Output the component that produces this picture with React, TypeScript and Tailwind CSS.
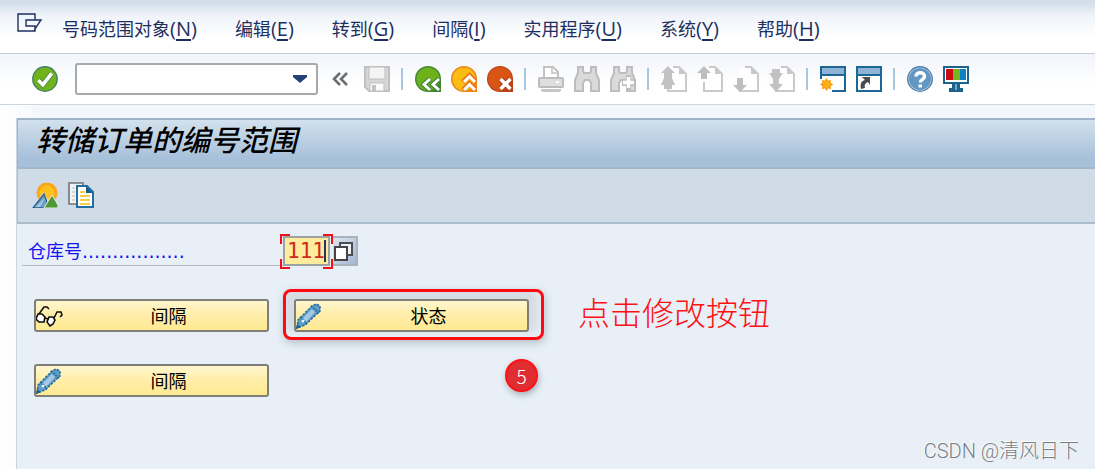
import { useState } from "react";
import type { ReactNode } from "react";

const MENUS = [
  { label: "号码范围对象", key: "N" },
  { label: "编辑", key: "E" },
  { label: "转到", key: "G" },
  { label: "间隔", key: "I" },
  { label: "实用程序", key: "U" },
  { label: "系统", key: "Y" },
  { label: "帮助", key: "H" },
];

export default function App() {
  const [command, setCommand] = useState("");
  const [warehouse, setWarehouse] = useState("111");

  return (
    <div className="relative flex min-h-screen flex-col bg-white font-['Open_Sans','Noto_Sans_CJK_SC',sans-serif] text-[18px] leading-6">
      {/* Menu bar */}
      <nav className="flex h-[54px] items-center border-b border-[#c3ced9] bg-linear-to-b from-[#d3deea] from-5% via-[#f0f4f9] via-30% to-white to-70% pl-4 text-[#1d2f60]">
        <button aria-label="Window menu" className="mb-2 h-6 w-[46px]">
          <WindowMenuIcon />
        </button>
        <div className="flex gap-[38px] pt-1">
          {MENUS.map((m) => (
            <button key={m.key} className="whitespace-nowrap">
              {m.label}
              <span className="text-[20px]">
                (<span className="underline underline-offset-3">{m.key}</span>)
              </span>
            </button>
          ))}
        </div>
      </nav>

      {/* Standard toolbar */}
      <div className="flex h-[51px] shrink-0 items-center gap-2.5 border-b border-[#ccd6df] bg-linear-to-b from-[#f1f4fa] to-white to-60% pb-px pl-8">
        <IconBtn label="Enter">
          <circle cx="13" cy="13" r="12.2" fill="#70b31c" stroke="#3f8368" strokeWidth="1.4" />
          <path d="M6.3 14.2l4.6 4.6 8.8-11.5" fill="none" stroke="#4e8c3b" strokeWidth="5.4" />
          <path d="M6.3 14.2l4.6 4.6 8.8-11.5" fill="none" stroke="#fff" strokeWidth="3.6" />
        </IconBtn>
        <div className="ml-[7px] flex h-8 w-[243px] items-center rounded-[3px] border-2 border-[#a6aaad] bg-white">
          <input
            aria-label="Command field"
            value={command}
            onChange={(e) => setCommand(e.target.value)}
            className="min-w-0 flex-1 bg-transparent px-1 outline-none"
          />
          <button aria-label="Command history" className="mr-2">
            <svg width="16" height="10" viewBox="0 0 16 10">
              <path d="M1 1h14v2l-7 6-7-6z" fill="#24427a" />
            </svg>
          </button>
        </div>
        <IconBtn label="Collapse">
          <path d="M12 7l-6 6 6 6M19 7l-6 6 6 6" fill="none" stroke="#6d6e70" strokeWidth="2.6" />
        </IconBtn>
        <IconBtn label="Save">
          <path d="M1 1h24v24H5l-4-4z" fill="#d6d6d6" stroke="#c0c0c0" strokeWidth="2" />
          <path d="M5 1h16v12H5z" fill="#f4f4f4" stroke="#c0c0c0" />
          <path d="M6 17h14v8H6z" fill="#fafafa" stroke="#c0c0c0" />
          <path d="M8 19h4v6H8z" fill="#c4c4c4" />
        </IconBtn>
        <Separator />
        <IconBtn label="Back">
          <path d="M26 26H13A13 13 0 1 1 26 13z" fill="#42882f" />
          <circle cx="13" cy="13" r="11.5" fill="#6fb11b" />
          <path d="M15 13l-6 5.5 6 5.5M24 13l-6 5.5 6 5.5" fill="none" stroke="#327b35" strokeWidth="5" />
          <path d="M15 13l-6 5.5 6 5.5M24 13l-6 5.5 6 5.5" fill="none" stroke="#fff" strokeWidth="3" />
        </IconBtn>
        <IconBtn label="Exit">
          <path d="M26 26H13A13 13 0 1 1 26 13z" fill="#ed8217" />
          <circle cx="13" cy="13" r="11.5" fill="#fbbd13" />
          <path d="M12 16l6.5-6.5L25 16M12 24l6.5-6.5L25 24" fill="none" stroke="#e97715" strokeWidth="5" />
          <path d="M13 16l5.5-5.5L24 16M13 24l5.5-5.5L24 24" fill="none" stroke="#fff" strokeWidth="3" />
        </IconBtn>
        <IconBtn label="Cancel">
          <path d="M26 26H13A13 13 0 1 1 26 13z" fill="#ba421b" />
          <circle cx="13" cy="13" r="11.8" fill="#d95514" />
          <path d="M13.5 13l10 10M23.5 13l-10 10" fill="none" stroke="#a93a1b" strokeWidth="5.6" />
          <path d="M13.5 13l10 10M23.5 13l-10 10" fill="none" stroke="#fff" strokeWidth="3.6" />
        </IconBtn>
        <Separator />
        <IconBtn label="Print">
          <path d="M6 13V1h9l5 5v7" fill="#fff" stroke="#c2c2c2" strokeWidth="2" />
          <path d="M14 1v6h6" fill="none" stroke="#c2c2c2" strokeWidth="1.6" />
          <rect x="1" y="12" width="24" height="9" rx="1" fill="#dedede" stroke="#bcbcbc" strokeWidth="2" />
          <path d="M18 16h3" stroke="#fff" strokeWidth="2" />
          <path d="M3 23h20v2l-2 1H5l-2-1z" fill="#c6c6c6" />
        </IconBtn>
        <IconBtn label="Find">
          <Binoculars />
        </IconBtn>
        <IconBtn label="Find next">
          <Binoculars />
          <path d="M16 9h5v4h5v7h-5v5h-5v-5h-4v-7h4z" fill="#bdbdbd" />
          <path d="M18.5 11v11M13 16.5h11" stroke="#fff" strokeWidth="3.4" />
        </IconBtn>
        <Separator />
        <IconBtn label="First page">
          <Sheet />
          <path d="M7 0l7 7h-3v5l3 7h-3v4H3v-4H0l3-7V7H0z" fill="#c2c2c2" />
        </IconBtn>
        <IconBtn label="Previous page">
          <Sheet />
          <path d="M7 0l7 7h-4v6H4V7H0z" fill="#bebebe" />
        </IconBtn>
        <IconBtn label="Next page">
          <Sheet />
          <path d="M7 26l7-7h-4v-7H4v7H0z" fill="#bebebe" />
        </IconBtn>
        <IconBtn label="Last page">
          <Sheet />
          <path d="M3 3h8v4h3l-4 6v5h4l-7 8-7-8h4v-5L0 7h3z" fill="#c2c2c2" />
        </IconBtn>
        <Separator />
        <IconBtn label="New session">
          <WindowFrame />
          <path d="M0 13h12v13H0z" fill="#fff" />
          <path
            d="M6.5 12l1.6 2.8 3-1-.6 3 2.8 1.7-2.8 1.7.6 3-3-1-1.6 2.8-1.6-2.8-3 1 .6-3L0 18.500l2.500-1.700-.6-3 3 1z"
            fill="#f79a0b"
          />
          <circle cx="6.5" cy="18.5" r="3.4" fill="#fbb016" />
        </IconBtn>
        <IconBtn label="Create shortcut">
          <WindowFrame />
          <path d="M5 23c-1-5 0-8 4-9l-3-3h8v8l-2-3c-3 1-4 3-3 6z" fill="#454b50" />
        </IconBtn>
        <Separator />
        <IconBtn label="Help">
          <circle cx="13" cy="13" r="12.2" fill="#dbe8f2" stroke="#4a7ba3" strokeWidth="1.4" />
          <circle cx="13" cy="13" r="11" fill="#6397c3" />
          <path d="M9 10.5c0-5 8.500-5 8.500-.3 0 3.300-4.200 3-4.200 6.300" fill="none" stroke="#fff" strokeWidth="3.4" />
          <path d="M11.500 18.500h3.500v3h-3.500z" fill="#fff" />
        </IconBtn>
        <IconBtn label="Customize layout">
          <path d="M0 0h26v18H0z" fill="#1b628d" />
          <path d="M2 2h22v14H2z" fill="#fff" />
          <path d="M3 3h7v11H3z" fill="#cc0a12" />
          <path d="M10 3h7v11h-7z" fill="#75b51e" />
          <path d="M17 3h6v11h-6z" fill="#0c7fc5" />
          <path d="M9 18h8v4h3v4H6v-4h3z" fill="#1b628d" />
          <path d="M12 18h2v6h-2z" fill="#79a7c6" />
        </IconBtn>
      </div>

      <main className="flex flex-1 flex-col bg-linear-to-r from-white to-[#f3f6fa] to-4% pt-[13px] pl-4">
        <div className="flex flex-1 flex-col border-l border-[#cad6e4] bg-[#e8eff6]">
          <h1 className="h-[51px] border-t-2 border-b-2 border-l border-[#9fb4ca] border-b-[#a4b6ca] bg-linear-to-b from-[#d2e1ed] to-[#a8c1da] to-80% pl-[18px] font-['Noto_Sans_CJK_SC',sans-serif] text-[29px] leading-9 font-medium text-black italic">
            转储订单的编号范围
          </h1>

          {/* Application toolbar */}
          <div className="flex h-[55px] items-center gap-2.5 border-b-2 border-l border-[#abbdcc] bg-[#cfdce7] pb-0.5 pl-3.5">
            <IconBtn label="Overview">
              <circle cx="15" cy="11" r="10.5" fill="#fba51b" />
              <circle cx="15" cy="11" r="7.5" fill="#fcc21c" />
              <path d="M0 26L12 10l7 16z" fill="#f2f6f8" />
              <path d="M1 26L12 12l5 14z" fill="#6f9fc6" stroke="#28638f" strokeWidth="1.4" />
              <path d="M3 25h5l5-9z" fill="#a6c5df" />
              <path d="M12 26l8-13 6 10v3z" fill="#4d9834" stroke="#e9eee2" />
            </IconBtn>
            <IconBtn label="Copy">
              <path d="M1 1h14v21H1z" fill="#f1f3f4" stroke="#6f7478" strokeWidth="1.6" />
              <path d="M4 6h3M4 10h3M4 14h3M4 18h3" stroke="#b9bec2" />
              <path d="M9 4h10l6 6v15H9z" fill="#fff" stroke="#226f9f" strokeWidth="2" />
              <path d="M18 4v7h7z" fill="#145c8b" />
              <path d="M12 10h5M12 14h10M12 18h10M12 22h10" stroke="#f5cf45" strokeWidth="2" />
            </IconBtn>
          </div>

          <form className="px-[5px] pt-3" onSubmit={(e) => e.preventDefault()}>
            <div className="flex h-[30px]">
              <label
                htmlFor="warehouse"
                className="flex w-[261px] items-center border-b border-[#b3bac0] pl-1.5 text-[#1414f0]"
              >
                仓库号<span className="font-['DejaVu_Sans',sans-serif] text-[19px]">.................</span>
              </label>
              <div className="relative mr-[3px] flex w-[47px] border-2 border-[#9da3a3] bg-[#ffeb9c]">
                <input
                  id="warehouse"
                  value={warehouse}
                  onChange={(e) => setWarehouse(e.target.value)}
                  className="w-full min-w-0 bg-transparent pl-0.5 font-['DejaVu_Sans_Mono',monospace] text-[21px] text-[#cd2b20] outline-none"
                />
                <span className="absolute top-0.5 right-0.5 h-[22px] w-0.5 bg-[#28345c]" />
                <span className="absolute -top-1 -left-[5px] size-2.5 border-t-2 border-l-2 border-[#f01015]" />
                <span className="absolute -top-1 -right-[5px] size-2.5 border-t-2 border-r-2 border-[#f01015]" />
                <span className="absolute -bottom-[5px] -left-[5px] size-2.5 border-b-2 border-l-2 border-[#f01015]" />
                <span className="absolute -right-[5px] -bottom-[5px] size-2.5 border-r-2 border-b-2 border-[#f01015]" />
              </div>
              <button
                type="button"
                aria-label="Possible entries"
                className="flex w-[25px] items-center border-t-2 border-r-2 border-b-2 border-[#a9b2bd] bg-linear-to-br from-[#dce6f0] to-[#a5b7d2] pl-px"
              >
                <svg width="19" height="19" viewBox="0 0 19 19">
                  <path d="M6 1h12v12H6z" fill="#eef2f6" stroke="#4d4d4d" strokeWidth="2" />
                  <path d="M1 5h12v13H1z" fill="#fff" stroke="#454545" strokeWidth="2" />
                </svg>
              </button>
            </div>

            <div className="flex flex-col gap-8 pt-[33px] pl-3">
              <div className="flex h-[33px] gap-[25px]">
                <ActionBtn icon={<GlassesIcon />}>间隔</ActionBtn>
                <div className="relative">
                  <span className="absolute -top-2.5 -right-[15px] -bottom-2 -left-[11px] rounded-lg border-3 border-[#ff0a10] bg-[#d5dce2] shadow-[1px_3px_8px_#b4bec7,inset_-3px_-5px_8px_#e8eff6]" />
                  <div className="relative">
                    <ActionBtn icon={<PencilIcon />}>状态</ActionBtn>
                  </div>
                  <span className="absolute top-[60px] left-[211px] flex size-[33px] items-center justify-center rounded-full border-2 border-[#ff1116] bg-[#de2e32] font-['Noto_Sans_CJK_SC',sans-serif] text-[19px] font-light text-white shadow-[1px_3px_6px_#a4afb9]">
                    5
                  </span>
                </div>
                <p className="ml-6 font-['Noto_Sans_CJK_SC',sans-serif] text-[32px] leading-6 font-light whitespace-nowrap text-[#ff1014]">
                  点击修改按钮
                </p>
              </div>
              <ActionBtn icon={<PencilIcon />}>间隔</ActionBtn>
            </div>
          </form>
        </div>
      </main>

      <div className="absolute right-4 bottom-1.5 font-['Roboto','Noto_Sans_CJK_SC',sans-serif] text-[20px] font-light text-[#777d82] [text-shadow:-1px_-1px_#fff]">
        CSDN @清风日下
      </div>
    </div>
  );
}

function IconBtn({ label, children }: { label: string; children: ReactNode }) {
  return (
    <button type="button" aria-label={label} className="size-[26px] shrink-0">
      <svg width="26" height="26" viewBox="0 0 26 26">
        {children}
      </svg>
    </button>
  );
}

function Separator() {
  return <span className="mr-0.5 ml-px h-[22px] w-0.5 shrink-0 bg-[#a6c6e2]" />;
}

function ActionBtn({ icon, children }: { icon: ReactNode; children: ReactNode }) {
  return (
    <button
      type="button"
      className="flex h-[33px] w-[235px] items-center rounded-[3px] border-2 border-[#7f7e78] bg-linear-to-b from-[#fff6cf] via-[#ffefae] via-40% to-[#ffe990] text-black"
    >
      <span className="w-[34px] shrink-0">{icon}</span>
      <span className="flex-1 text-center">{children}</span>
    </button>
  );
}

function WindowMenuIcon() {
  return (
    <svg width="27" height="20" viewBox="0 0 27 20" fill="none" stroke="#1d2f60" strokeWidth="1.4">
      <path d="M19 4V1H2v17h17v-2" />
      <path d="M19 4v3h-9v6h9v3l6-9h-6" />
    </svg>
  );
}

function Binoculars() {
  return (
    <path
      d="M4 1h5v4l1 2h6l1-2V1h5v6l3 7v11h-8v-8l-2-3h-4l-2 3v8H1V14l3-7z"
      fill="#dadada"
      stroke="#bdbdbd"
      strokeWidth="2"
    />
  );
}

function Sheet() {
  return (
    <>
      <path d="M7 1h11l7 7v17H7v-5M7 1v13" fill="#fff" />
      <path d="M12 1h6l7 7v17H7v-9" fill="none" stroke="#c9c9c9" strokeWidth="2" />
      <path d="M18 1v7h7z" fill="#c9c9c9" />
    </>
  );
}

function WindowFrame() {
  return (
    <>
      <path d="M1 1h24v24H1z" fill="#fff" stroke="#1c6795" strokeWidth="2" />
      <path d="M2 2h22v6H2z" fill="#8db3d5" />
      <path d="M1 9h24" stroke="#1c6795" strokeWidth="2" />
    </>
  );
}

function GlassesIcon() {
  return (
    <svg width="27" height="22" viewBox="0 0 27 22" stroke="#111" strokeWidth="1.6">
      <path d="M2 9h4l3 3-1 5H3l-3-3zM13 12h4l2 3-2 4-3 2-3-4z" fill="#fff" />
      <path d="M3 9l5-7h3l2 2M8 13l5 1M18 13l3-6h4l1 3-2 2" fill="none" />
    </svg>
  );
}

function PencilIcon() {
  return (
    <svg width="26" height="26" viewBox="0 0 26 26">
      <path d="M1 25l1-8L16 3l4-2 4 2v5L9 22z" fill="#5f9dc9" />
      <path d="M1 25l1-8L16 3l4-2 4 2v5L9 22z" fill="none" stroke="#276f9e" strokeWidth="1.6" strokeDasharray="2.5 1.2" />
      <path d="M7 15l9-9 3 3-9 10z" fill="#a6c8e2" />
      <path d="M15 3l8 7M4 14l7 7" stroke="#2d749f" strokeWidth="2" strokeDasharray="2 1" />
      <circle cx="7" cy="18" r="1.5" fill="#eaf3f8" />
      <path d="M0 26l1-5 4 3z" fill="#1d5f91" />
    </svg>
  );
}
